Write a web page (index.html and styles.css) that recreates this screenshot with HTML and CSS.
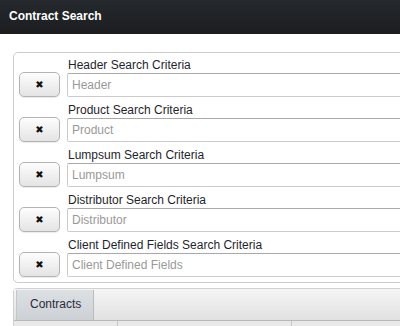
FILE: index.html
```html
<!DOCTYPE html>
<html lang="en">
<head>
    <meta charset="UTF-8">
    <title>Contract Search</title>
    <link rel="stylesheet" href="styles.css">
</head>
<body>
<div class="topbar">Contract Search</div>

<div class="page">
    <div class="criteria">
        <div class="crit-row">
            <button class="clear-btn" type="button">&#x2716;</button>
            <div class="field">
                <label>Header Search Criteria</label>
                <input type="text" placeholder="Header">
            </div>
        </div>
        <div class="crit-row">
            <button class="clear-btn" type="button">&#x2716;</button>
            <div class="field">
                <label>Product Search Criteria</label>
                <input type="text" placeholder="Product">
            </div>
        </div>
        <div class="crit-row">
            <button class="clear-btn" type="button">&#x2716;</button>
            <div class="field">
                <label>Lumpsum Search Criteria</label>
                <input type="text" placeholder="Lumpsum">
            </div>
        </div>
        <div class="crit-row">
            <button class="clear-btn" type="button">&#x2716;</button>
            <div class="field">
                <label>Distributor Search Criteria</label>
                <input type="text" placeholder="Distributor">
            </div>
        </div>
        <div class="crit-row">
            <button class="clear-btn" type="button">&#x2716;</button>
            <div class="field">
                <label>Client Defined Fields Search Criteria</label>
                <input type="text" placeholder="Client Defined Fields">
            </div>
        </div>
    </div>

    <div class="tabs">
        <div class="tab-bar">
            <div class="tab active">Contracts</div>
        </div>
        <div class="grid-head">
            <div class="col c1"></div>
            <div class="col c2"></div>
            <div class="col c3"></div>
        </div>
    </div>
</div>
</body>
</html>
```

FILE: styles.css
```css
html, body {
    margin: 0;
    overflow: hidden;
}

body {
    background: #fff;
    font-family: "Liberation Sans", Arial, sans-serif;
    font-size: 12px;
    color: #222;
}

.topbar {
    height: 34px;
    line-height: 33px;
    padding-left: 9px;
    background: linear-gradient(#26292d, #1b1d20);
    color: #fff;
    font-weight: bold;
    font-size: 12px;
}

.page {
    padding: 18px 0 0 13px;
    width: 520px;
}

.criteria {
    border: 1px solid #ccc;
    border-radius: 5px;
    padding: 4px 5px 5px 5px;
    display: flex;
    flex-direction: column;
    gap: 5px;
}

.crit-row {
    display: flex;
    align-items: flex-end;
    gap: 7px;
}

.clear-btn {
    width: 41px;
    height: 25px;
    padding: 0;
    border: 1px solid #b3b3b3;
    border-radius: 5px;
    background: linear-gradient(#fdfdfd, #e4e4e4);
    box-shadow: 0 1px 1px rgba(0, 0, 0, 0.08);
    font-size: 10px;
    color: #111;
    font-family: "DejaVu Sans", sans-serif;
    line-height: 23px;
}

.field {
    flex: 1;
    display: flex;
    flex-direction: column;
}

.field label {
    line-height: 16px;
    padding-left: 1px;
    color: #1f1f2e;
}

.field input {
    height: 24px;
    box-sizing: border-box;
    border: 1px solid #ccc;
    border-top-color: #a9a9a9;
    border-radius: 2px;
    padding: 0 4px;
    font-family: "Liberation Sans", Arial, sans-serif;
    font-size: 12px;
    outline: none;
}

.field input::placeholder {
    color: #999;
}

.tabs {
    margin-top: 5px;
    border: 1px solid #d0d0d0;
    border-bottom: none;
    border-radius: 4px 4px 0 0;
}

.tab-bar {
    height: 30px;
    padding: 1px 0 0 2px;
    background: linear-gradient(#f5f5f5, #e1e1e1);
    border-bottom: 1px solid #b8b8b8;
    display: flex;
}

.tab {
    padding: 0 12px 0 13px;
    line-height: 29px;
    font-size: 12px;
    color: #2a2a3a;
}

.tab.active {
    background: linear-gradient(#dde0e3, #cdd1d5);
    border-left: 1px solid #c4c7ca;
    border-right: 1px solid #b9bcbf;
}

.grid-head {
    display: flex;
    height: 12px;
    background: #e9e9e9;
}

.grid-head .col {
    border-right: 1px solid #c8c8c8;
}

.c1 { width: 103px; }
.c2 { width: 173px; }
.c3 { flex: 1; }
```
